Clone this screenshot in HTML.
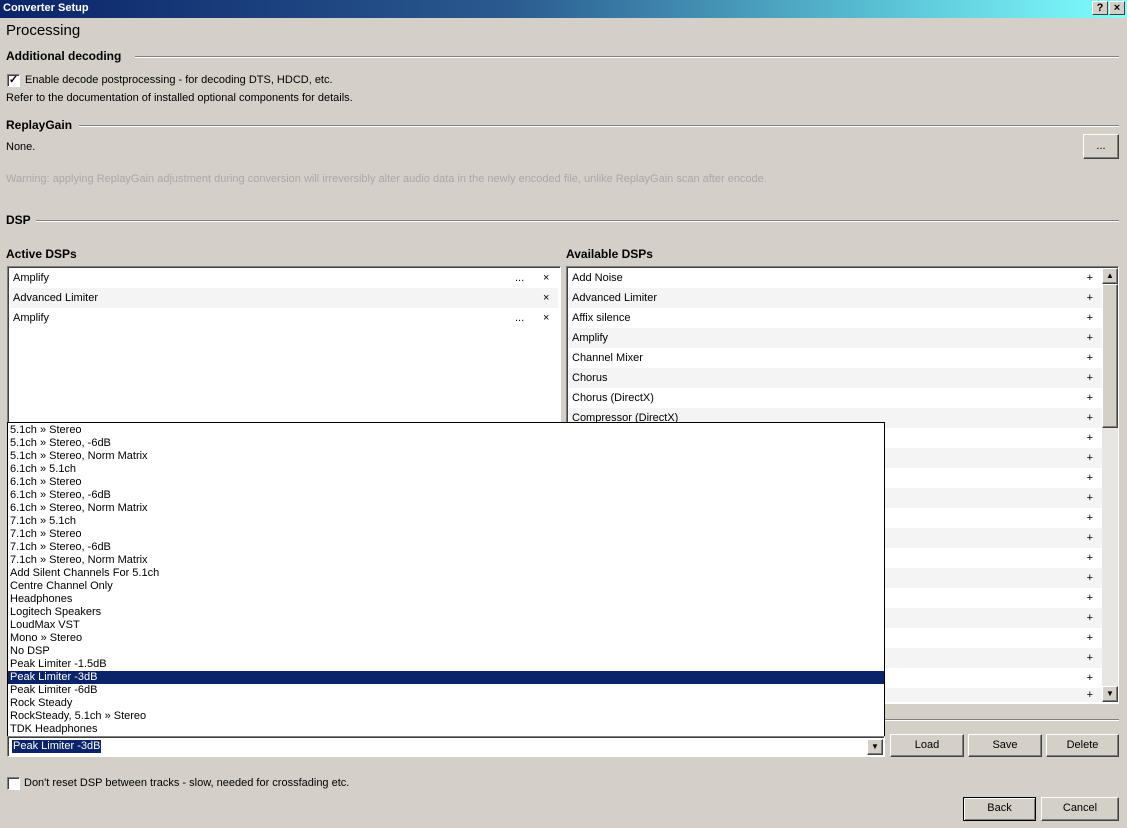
<!DOCTYPE html>
<html><head><style>
*{margin:0;padding:0;box-sizing:border-box}
body{width:1127px;height:828px;background:#d4d0c8;font-family:"Liberation Sans",sans-serif;font-size:11px;color:#000;position:relative;overflow:hidden}
.a{position:absolute;white-space:nowrap}
.title{left:0;top:0;width:1127px;height:18px;background:linear-gradient(90deg,#0a246a 0%,#2a5a8f 45%,#5cc6d8 80%,#80ffff 100%);color:#fff;font-weight:bold;font-size:11px;line-height:17px;padding-left:3px}
.tb{top:1px;width:16px;height:14px;background:#d4d0c8;border:1px solid;border-color:#fff #404040 #404040 #fff;color:#000;font-weight:bold;font-size:11px;text-align:center;line-height:12px}
.h{font-weight:bold;font-size:12px}
.line{height:2px;border-top:1px solid #808080;border-bottom:1px solid #fff}
.box{background:#fff;border:1px solid;border-color:#808080 #fff #fff #808080;box-shadow:inset 1px 1px 0 #404040}
.btn{background:#d4d0c8;border:1px solid;border-color:#fff #404040 #404040 #fff;box-shadow:inset -1px -1px 0 #808080;text-align:center;line-height:21px}
.row{position:absolute;left:2px;height:20px;line-height:20px;padding-left:3px}
.row.alt{background:#f4f4f4}
.pl{position:absolute;right:10px}
.pop div{height:13px;line-height:13px;padding-left:2px}
.chk{width:13px;height:13px;background:#fff;border:1px solid;border-color:#808080 #fff #fff #808080;box-shadow:inset 1px 1px 0 #404040}
</style></head><body>
<div class="a title">Converter Setup</div>
<div class="a tb" style="left:1092px">?</div>
<div class="a tb" style="left:1109px">×</div>

<div class="a" style="left:6px;top:22px;font-size:15px">Processing</div>
<div class="a h" style="left:6px;top:49px">Additional decoding</div>
<div class="a line" style="left:135px;top:56px;width:984px"></div>
<div class="a chk" style="left:7px;top:74px;font-size:11px;line-height:10px;text-align:center;font-weight:bold">✓</div>
<div class="a" style="left:25px;top:74px">Enable decode postprocessing - for decoding DTS, HDCD, etc.</div>
<div class="a" style="left:6px;top:92px">Refer to the documentation of installed optional components for details.</div>

<div class="a h" style="left:6px;top:118px">ReplayGain</div>
<div class="a line" style="left:79px;top:125px;width:1040px"></div>
<div class="a" style="left:6px;top:141px">None.</div>
<div class="a btn" style="left:1083px;top:134px;width:36px;height:25px;line-height:23px">...</div>
<div class="a" style="left:6px;top:173px;color:#a8a8a8">Warning: applying ReplayGain adjustment during conversion will irreversibly alter audio data in the newly encoded file, unlike ReplayGain scan after encode.</div>

<div class="a h" style="left:6px;top:213px">DSP</div>
<div class="a line" style="left:36px;top:220px;width:1083px"></div>

<div class="a h" style="left:6px;top:247px">Active DSPs</div>
<div class="a h" style="left:566px;top:247px">Available DSPs</div>

<div class="a box" style="left:7px;top:266px;width:554px;height:440px">
<div class="row" style="top:1px;width:548px">Amplify<span class="a" style="left:505px">...</span><span class="a" style="left:533px">×</span></div>
<div class="row alt" style="top:21px;width:548px">Advanced Limiter<span class="a" style="left:533px">×</span></div>
<div class="row" style="top:41px;width:548px">Amplify<span class="a" style="left:505px">...</span><span class="a" style="left:533px">×</span></div>
</div>

<div class="a box" style="left:566px;top:266px;width:553px;height:438px">
<div class="row" style="top:1px;width:534px">Add Noise<span class="pl">+</span></div>
<div class="row alt" style="top:21px;width:534px">Advanced Limiter<span class="pl">+</span></div>
<div class="row" style="top:41px;width:534px">Affix silence<span class="pl">+</span></div>
<div class="row alt" style="top:61px;width:534px">Amplify<span class="pl">+</span></div>
<div class="row" style="top:81px;width:534px">Channel Mixer<span class="pl">+</span></div>
<div class="row alt" style="top:101px;width:534px">Chorus<span class="pl">+</span></div>
<div class="row" style="top:121px;width:534px">Chorus (DirectX)<span class="pl">+</span></div>
<div class="row alt" style="top:141px;width:534px">Compressor (DirectX)<span class="pl">+</span></div>
<div class="row" style="top:161px;width:534px"><span class="pl">+</span></div>
<div class="row alt" style="top:181px;width:534px"><span class="pl">+</span></div>
<div class="row" style="top:201px;width:534px"><span class="pl">+</span></div>
<div class="row alt" style="top:221px;width:534px"><span class="pl">+</span></div>
<div class="row" style="top:241px;width:534px"><span class="pl">+</span></div>
<div class="row alt" style="top:261px;width:534px"><span class="pl">+</span></div>
<div class="row" style="top:281px;width:534px"><span class="pl">+</span></div>
<div class="row alt" style="top:301px;width:534px"><span class="pl">+</span></div>
<div class="row" style="top:321px;width:534px"><span class="pl">+</span></div>
<div class="row alt" style="top:341px;width:534px"><span class="pl">+</span></div>
<div class="row" style="top:361px;width:534px"><span class="pl">+</span></div>
<div class="row alt" style="top:381px;width:534px"><span class="pl">+</span></div>
<div class="row" style="top:401px;width:534px"><span class="pl">+</span></div>
<div class="row alt" style="top:421px;width:534px;height:14px"><span class="pl" style="top:-3px">+</span></div>
<div class="a" style="left:535px;top:1px;width:16px;height:434px;background:#e8e6e2"></div>
<div class="a btn" style="left:535px;top:1px;width:16px;height:16px;font-size:8px;line-height:14px">▲</div>
<div class="a btn" style="left:535px;top:17px;width:16px;height:144px"></div>
<div class="a btn" style="left:535px;top:419px;width:16px;height:16px;font-size:8px;line-height:14px">▼</div>
</div>

<div class="a line" style="left:7px;top:719px;width:1112px"></div>

<div class="a pop" style="left:7px;top:422px;width:878px;height:315px;background:#fff;border:1px solid #000;padding-top:1px">
<div>5.1ch » Stereo</div><div>5.1ch » Stereo, -6dB</div><div>5.1ch » Stereo, Norm Matrix</div><div>6.1ch » 5.1ch</div><div>6.1ch » Stereo</div><div>6.1ch » Stereo, -6dB</div><div>6.1ch » Stereo, Norm Matrix</div><div>7.1ch » 5.1ch</div><div>7.1ch » Stereo</div><div>7.1ch » Stereo, -6dB</div><div>7.1ch » Stereo, Norm Matrix</div><div>Add Silent Channels For 5.1ch</div><div>Centre Channel Only</div><div>Headphones</div><div>Logitech Speakers</div><div>LoudMax VST</div><div>Mono » Stereo</div><div>No DSP</div><div>Peak Limiter -1.5dB</div><div style="background:#0a246a;color:#fff">Peak Limiter -3dB</div><div>Peak Limiter -6dB</div><div>Rock Steady</div><div>RockSteady, 5.1ch » Stereo</div><div>TDK Headphones</div>
</div>

<div class="a box" style="left:7px;top:736px;width:878px;height:21px">
<span class="a" style="left:4px;top:3px;background:#0a246a;color:#fff;padding:0 1px;line-height:13px">Peak Limiter -3dB</span>
<div class="a btn" style="left:859px;top:2px;width:16px;height:16px;font-size:8px;line-height:14px">▼</div>
</div>
<div class="a btn" style="left:890px;top:734px;width:74px;height:23px">Load</div>
<div class="a btn" style="left:968px;top:734px;width:74px;height:23px">Save</div>
<div class="a btn" style="left:1046px;top:734px;width:73px;height:23px">Delete</div>

<div class="a chk" style="left:7px;top:777px"></div>
<div class="a" style="left:24px;top:777px">Don't reset DSP between tracks - slow, needed for crossfading etc.</div>

<div class="a btn" style="left:963px;top:797px;width:73px;height:24px;border:1px solid #000;box-shadow:inset 1px 1px 0 #fff,inset -1px -1px 0 #808080">Back</div>
<div class="a btn" style="left:1041px;top:797px;width:78px;height:24px">Cancel</div>
</body></html>
